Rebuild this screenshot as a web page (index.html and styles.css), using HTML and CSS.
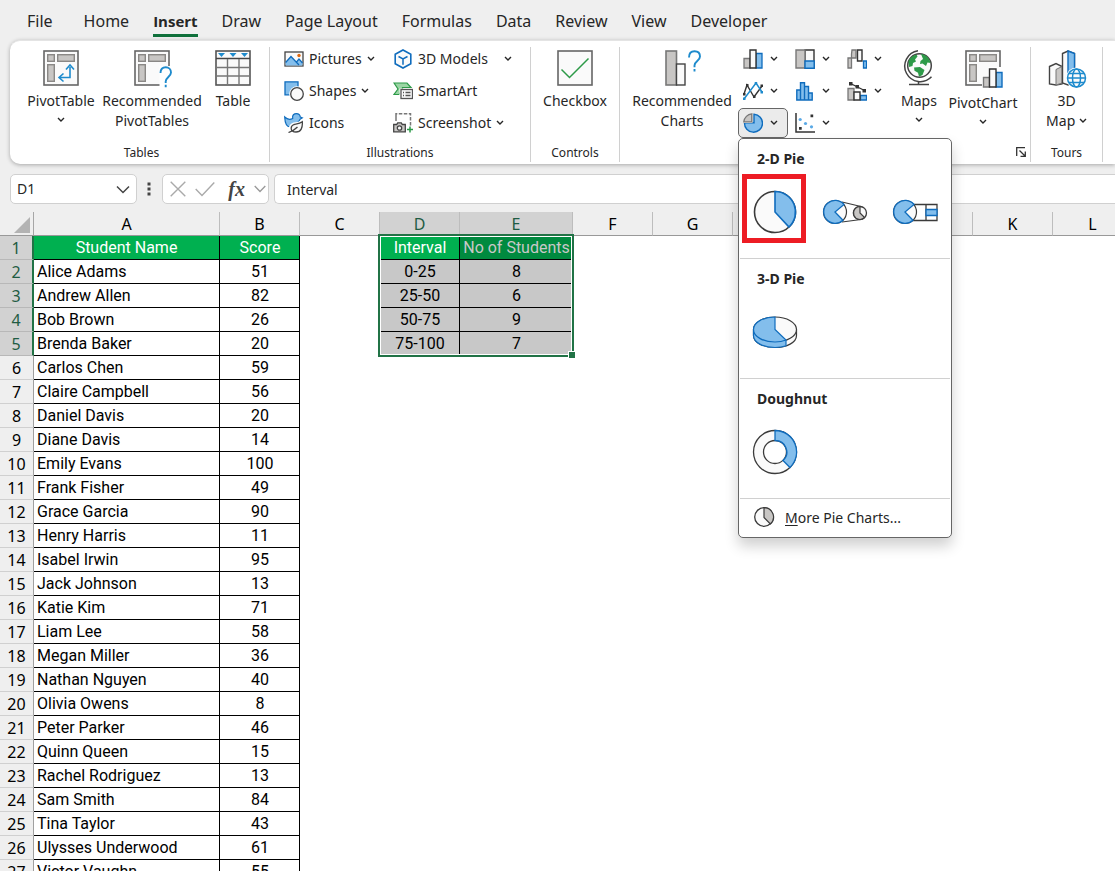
FILE: index.html
```html
<!DOCTYPE html>
<html lang="en">
<head>
<meta charset="utf-8">
<title>Workbook</title>
<link rel="stylesheet" href="styles.css">
</head>
<body>
<svg class="defs" aria-hidden="true">
  <symbol id="chev" viewBox="0 0 8 6"><path d="M1 1l3 3 3-3" fill="none" stroke="#262626" stroke-width="1.4"/></symbol>
  <symbol id="pivot" viewBox="0 0 36 36">
    <rect x="1" y="1" width="34" height="34" fill="#fafafa" stroke="#666" stroke-width="1.6"/>
    <g fill="#c8c6c4" stroke="#8a8886" stroke-width="1.4"><rect x="4.700" y="4.700" width="6.600" height="6.600"/><rect x="14.700" y="4.700" width="16.600" height="6.600"/><rect x="4.700" y="14.700" width="6.600" height="16.600"/></g>
  </symbol>
</svg>

<nav class="tabs">
  <button class="tab tab-file">File</button>
  <button class="tab">Home</button>
  <button class="tab active">Insert</button>
  <button class="tab">Draw</button>
  <button class="tab">Page Layout</button>
  <button class="tab">Formulas</button>
  <button class="tab">Data</button>
  <button class="tab">Review</button>
  <button class="tab">View</button>
  <button class="tab">Developer</button>
</nav>

<div class="ribbon">
  <section class="group g-tables">
    <div class="tools">
      <button class="big w-pt">
        <svg class="ico" viewBox="0 0 36 36"><use href="#pivot"/><path d="M27 17v10.500H17M23 19.500l4-4.500 4 4.500M20.500 23.500l-4.500 4 4.500 4" fill="none" stroke="#1e8bcd" stroke-width="1.600"/></svg>
        <span>PivotTable</span><svg class="chev"><use href="#chev"/></svg>
      </button>
      <button class="big w-rec">
        <svg class="ico wide" viewBox="0 0 40 38"><use href="#pivot" x="2" width="36" height="36"/><path d="M27.500 38V16H40v22z" fill="#fff"/><path d="M28.500 23c0-4 2.500-5.800 5.300-5.800s5.200 2 5.200 5.300c0 4-5.300 5-5.300 9v1.500M33.700 34.800v2.500" fill="none" stroke="#1e8bcd" stroke-width="1.900"/></svg>
        <span>Recommended<br>PivotTables</span>
      </button>
      <button class="big w-tb">
        <svg class="ico" viewBox="0 0 36 36"><rect x="1" y="1" width="34" height="34" fill="#fafafa" stroke="#555" stroke-width="1.600"/><path d="M1 8.500h34" stroke="#444" stroke-width="1.600"/><path d="M1 17.500h34M1 26h34M12.500 9v26M24 9v26" stroke="#777" stroke-width="1.400"/><path d="M3 3h7l-3.500 4zM14.500 3h7L18 7zM26 3h7l-3.500 4z" fill="#1e8bcd"/></svg>
        <span>Table</span>
      </button>
    </div>
    <h2>Tables</h2>
  </section>

  <section class="group g-ill">
    <div class="tools">
      <div class="list">
        <button class="row"><svg class="sm" viewBox="0 0 20 20"><rect x="1" y="3" width="18" height="14" fill="#fafafa" stroke="#444" stroke-width="1.300"/><path d="M1.600 13.500l5.400-6 5.500 6 2.500-3 3.400 3.500v2.400H1.600z" fill="#83beec"/><path d="M1.600 13.500l5.400-6 8 8.500M12.500 13l2.500-3 3.500 4" fill="none" stroke="#0f6cbd" stroke-width="1.300"/><circle cx="15" cy="6.500" r="1.700" fill="#e0690f"/></svg>Pictures<svg class="chev"><use href="#chev"/></svg></button>
        <button class="row"><svg class="sm" viewBox="0 0 20 20"><path d="M1 .800h13v13H1z" fill="#83beec" stroke="#0f6cbd" stroke-width="1.300"/><circle cx="13" cy="13" r="7.800" fill="#fff"/><circle cx="13" cy="13" r="6.300" fill="#fafafa" stroke="#444" stroke-width="1.300"/></svg>Shapes<svg class="chev"><use href="#chev"/></svg></button>
        <button class="row"><svg class="sm" viewBox="0 0 20 20"><path d="M.700 4c2 2 5 3 8 1.500C8 2 10 .700 12.500.700 15 .700 16 2 16.300 4l2 .800-2.300 1.500c-.5 2-2 3-4 4-2 2.500-4 3.500-6 3.500-3 0-5-3-5.300-9.800z" fill="#83beec" stroke="#0f6cbd" stroke-width="1.200"/><path d="M18.500 8.500c.5 6-1 11-6.500 11-7 0-7-6.500-2-8.500 4-.5 6-1 8.500-2.500z" fill="#fafafa" stroke="#fff" stroke-width="3"/><path d="M18.300 8.700c.5 6-1.300 10.300-6.300 10.300-6 0-6-6-2-7.500 3.500-.8 5.800-1 8.300-2.800zM4.500 19.500c3-1 6-2.500 9-5.500" fill="#fafafa" stroke="#444" stroke-width="1.300"/></svg>Icons</button>
      </div>
      <div class="list second">
        <button class="row"><svg class="sm" viewBox="0 0 20 20"><path d="M10 1l7.800 4.300v9.400L10 19l-7.800-4.300V5.300z" fill="#fafafa" stroke="#0f6cbd" stroke-width="1.600"/><path d="M5.500 7.500l4.500 2.300 4.500-2.300M10 9.800v6" fill="none" stroke="#0f6cbd" stroke-width="1.500"/></svg>3D Models<svg class="chev far"><use href="#chev"/></svg></button>
        <button class="row"><svg class="sm" viewBox="0 0 20 20"><path d="M1 2h13l4 4.500H9.500V9L6 13.500H1L5 8z" fill="#9bd5a4" stroke="#2d9a48" stroke-width="1.200"/><rect x="6.500" y="7.500" width="14" height="11" fill="#fff"/><rect x="8" y="8.500" width="11.500" height="9" fill="#fafafa" stroke="#555" stroke-width="1.300"/><path d="M10 11.500h1M12.500 11.500h5M10 14.500h1M12.500 14.500h5" stroke="#555" stroke-width="1.300"/></svg>SmartArt</button>
        <button class="row"><svg class="sm" viewBox="0 0 20 20"><path d="M3 8V.800h14.500V14M3 1v7" fill="none" stroke="#777" stroke-width="1.500" stroke-dasharray="3.500 1.500"/><path d="M.700 11.500h3l1-1.700h3.600l1 1.700h3v7.300H.700z" fill="#c8c6c4" stroke="#444" stroke-width="1.300"/><circle cx="6.500" cy="15" r="2.200" fill="#fafafa" stroke="#444" stroke-width="1.300"/><path d="M17 13.500v6M14 16.500h6" stroke="#2d9a48" stroke-width="1.500"/></svg>Screenshot<svg class="chev"><use href="#chev"/></svg></button>
      </div>
    </div>
    <h2>Illustrations</h2>
  </section>

  <section class="group g-ctl">
    <div class="tools">
      <button class="big">
        <svg class="ico" viewBox="0 0 36 36"><rect x="1" y="1" width="34" height="34" fill="#fafafa" stroke="#666" stroke-width="1.600"/><path d="M4.500 19.500l8 8L31.500 8.500" fill="none" stroke="#2d9a48" stroke-width="1.500"/></svg>
        <span>Checkbox</span>
      </button>
    </div>
    <h2>Controls</h2>
  </section>

  <section class="group g-charts">
    <div class="tools">
      <button class="big w-rch">
        <svg class="ico wide" viewBox="0 0 40 38"><rect x="4" y="1" width="10.500" height="34" fill="#c8c6c4" stroke="#777" stroke-width="1.600"/><rect x="14.500" y="14" width="8.500" height="21" fill="#fafafa" stroke="#444" stroke-width="1.400"/><path d="M27 7.500c0-4.500 2.500-6.300 5.500-6.300S38 3 38 6.500c0 4.500-5.500 4.500-5.500 9v1.700M32.500 19v2.500" fill="none" stroke="#1e8bcd" stroke-width="1.900"/></svg>
        <span>Recommended<br>Charts</span>
      </button>
      <div class="chart-grid">
        <button class="mini" aria-label="Column chart"><svg class="sm" viewBox="0 0 20 20"><path d="M1 9.500h6V19H1z" fill="#c8c6c4" stroke="#777" stroke-width="1.300"/><path d="M13 4.500h6V19h-6z" fill="#83beec" stroke="#0f6cbd" stroke-width="1.300"/><path d="M7 1h6v18H7z" fill="#fafafa" stroke="#333" stroke-width="1.400"/></svg><svg class="chev"><use href="#chev"/></svg></button>
        <button class="mini" aria-label="Hierarchy chart"><svg class="sm" viewBox="0 0 20 20"><path d="M10 1h9v18h-9z" fill="#fafafa" stroke="#333" stroke-width="1.400"/><path d="M1 1h9v18H1z" fill="#c8c6c4" stroke="#777" stroke-width="1.400"/><path d="M10 12h9.200v7.200H10z" fill="#83beec" stroke="#0f6cbd" stroke-width="1.400"/></svg><svg class="chev"><use href="#chev"/></svg></button>
        <button class="mini" aria-label="Waterfall chart"><svg class="sm" viewBox="0 0 20 20"><path d="M1 9h3.500v10H1zM5 1h4v8H4.500V5z" fill="#c8c6c4" stroke="#777" stroke-width="1.300"/><path d="M10.500 1H15v11h-4.500z" fill="#fafafa" stroke="#333" stroke-width="1.400"/><path d="M16.500 12h3v7h-3z" fill="#83beec" stroke="#0f6cbd" stroke-width="1.300"/></svg><svg class="chev"><use href="#chev"/></svg></button>
        <button class="mini" aria-label="Line chart"><svg class="sm" viewBox="0 0 20 20"><path d="M1 13L4 4l7 12 8-11" fill="none" stroke="#333" stroke-width="1.400"/><path d="M1 18L13 2l6 9" fill="none" stroke="#1e8bcd" stroke-width="1.500"/><path d="M3 3h2.500v2.500H3zM0 12h2.500v2.500H0zM10 14.500h2.500V17H10zM17.500 3.500H20V6h-2.500z" fill="#333"/><path d="M0 16.500h2.500V19H0zM11.700 1h2.500v2.500h-2.500zM17.500 10H20v2.500h-2.500z" fill="#1e8bcd"/></svg><svg class="chev"><use href="#chev"/></svg></button>
        <button class="mini" aria-label="Statistic chart"><svg class="sm" viewBox="0 0 20 20"><path d="M1.800 9h3.700v10H1.800zM5.500 1.800h4V19h-4zM9.500 5.500h4V19h-4zM13.500 12h3.700v7h-3.700z" fill="#83beec" stroke="#0f6cbd" stroke-width="1.400"/></svg><svg class="chev"><use href="#chev"/></svg></button>
        <button class="mini" aria-label="Combo chart"><svg class="sm" viewBox="0 0 20 20"><path d="M1 7.500h6V19H1z" fill="#c8c6c4" stroke="#777" stroke-width="1.300"/><path d="M13.500 14.500h6V19h-6z" fill="#83beec" stroke="#0f6cbd" stroke-width="1.300"/><path d="M7 11h6v8H7z" fill="#fafafa" stroke="#333" stroke-width="1.400"/><path d="M3.500 2.500l14 7" stroke="#333" stroke-width="1.300"/><path d="M2 1h3.500v3.500H2zM8.500 4H12v3.500H8.500zM15.500 8H19v3.500h-3.500z" fill="#333"/></svg><svg class="chev"><use href="#chev"/></svg></button>
        <div class="pie-drop">
          <button class="mini open" aria-label="Pie chart" aria-expanded="true"><svg class="sm" viewBox="0 0 20 20"><path d="M11 1.200v8.500H1.500A9 9 0 1 0 11 1.200z" fill="#83beec" stroke="#0f6cbd" stroke-width="1.400"/><path d="M9.500-1v11H-1V-1z" fill="#ebebeb"/><path d="M8.800.800v8H.800A9 9 0 0 1 8.800.800z" fill="#c8c6c4" stroke="#777" stroke-width="1.300"/></svg><svg class="chev"><use href="#chev"/></svg></button>
          <div class="menu">
            <section class="menu-part">
              <h3>2-D Pie</h3>
              <div class="gallery">
                <button class="pick marked" aria-label="Pie"><svg class="art" viewBox="0 0 46 46"><circle cx="23" cy="23" r="20.500" fill="#fafafa" stroke="#3b3b3b" stroke-width="1.600"/><path d="M23 2.500A20.500 20.500 0 0 1 37 38L23 23z" fill="#83beec" stroke="#0f6cbd" stroke-width="1.600"/></svg></button>
                <button class="pick" aria-label="Pie of Pie"><svg class="art" viewBox="0 0 46 46"><path d="M20 13l19 4.500M20 33l19-2.500" stroke="#3b3b3b" stroke-width="1.200"/><circle cx="13" cy="23" r="11.500" fill="#fafafa" stroke="#3b3b3b" stroke-width="1.200"/><path d="M22 15.500A11.500 11.500 0 1 0 21 31.300L13 23z" fill="#83beec" stroke="#0f6cbd" stroke-width="1.300"/><circle cx="38" cy="24" r="6.500" fill="#fafafa" stroke="#3b3b3b" stroke-width="1.300"/><path d="M38 17.500a6.500 6.500 0 1 0 4.600 11L38 24z" fill="#c8c6c4" stroke="#3b3b3b" stroke-width="1.200"/></svg></button>
                <button class="pick" aria-label="Bar of Pie"><svg class="art" viewBox="0 0 46 46"><path d="M20 15.500h25v16H20M34 15.500v16" fill="none" stroke="#3b3b3b" stroke-width="1.300"/><circle cx="13" cy="23" r="11.500" fill="#fafafa" stroke="#3b3b3b" stroke-width="1.200"/><path d="M22 15.500A11.500 11.500 0 1 0 21 31.300L13 23z" fill="#83beec" stroke="#0f6cbd" stroke-width="1.300"/><path d="M34 20.500h11v6H34z" fill="#83beec" stroke="#0f6cbd" stroke-width="1.300"/></svg></button>
              </div>
            </section>
            <section class="menu-part">
              <h3>3-D Pie</h3>
              <div class="gallery">
                <button class="pick" aria-label="3-D Pie"><svg class="art" viewBox="0 0 46 46"><path d="M1.500 20.500v6c0 7 9.700 12 21.500 12s21.500-5 21.500-12v-6" fill="#fafafa" stroke="#3b3b3b" stroke-width="1.200"/><ellipse cx="23" cy="20.500" rx="21.500" ry="12.500" fill="#fafafa" stroke="#3b3b3b" stroke-width="1.200"/><path d="M23 8C11 8 1.500 13.500 1.500 20.500v6c0 7 9.700 12 21.500 12 4 0 8-.600 11-1.700V31L23 20.500z" fill="#83beec"/><path d="M23 8C11 8 1.500 13.500 1.500 20.500v6c0 7 9.700 12 21.500 12 4 0 8-.600 11-1.700V31L23 20.500zM1.500 20.500c0 7 9.500 12.500 21.500 12.500 4 0 8-.700 11-2" fill="none" stroke="#0f6cbd" stroke-width="1.200"/></svg></button>
              </div>
            </section>
            <section class="menu-part">
              <h3>Doughnut</h3>
              <div class="gallery">
                <button class="pick" aria-label="Doughnut"><svg class="art" viewBox="0 0 46 46"><circle cx="23" cy="23" r="21.500" fill="#fafafa" stroke="#3b3b3b" stroke-width="1.300"/><circle cx="23" cy="23" r="11.500" fill="#fff" stroke="#3b3b3b" stroke-width="1.300"/><path d="M23 1.500A21.500 21.500 0 0 1 38 38.500L31 31.500A11.500 11.500 0 0 0 23 11.500z" fill="#83beec" stroke="#0f6cbd" stroke-width="1.300"/></svg></button>
              </div>
            </section>
            <button class="more"><svg class="more-ico" viewBox="0 0 22 22"><circle cx="11" cy="11" r="9.300" fill="#fafafa" stroke="#3b3b3b" stroke-width="1.300"/><path d="M11 1.700A9.300 9.300 0 0 1 17.300 18L11 11.500z" fill="#c8c6c4" stroke="#3b3b3b" stroke-width="1.200"/></svg><span><u>M</u>ore Pie Charts...</span></button>
          </div>
        </div>
        <button class="mini" aria-label="Scatter chart"><svg class="sm" viewBox="0 0 20 20"><path d="M1 0v19h19" fill="none" stroke="#333" stroke-width="1.500"/><path d="M15.500 1.500h2.700v2.700h-2.700zM4 14h2.700v2.700H4z" fill="#333"/><circle cx="5.200" cy="6.500" r="1.600" fill="#5aa9e6"/><circle cx="10.500" cy="10.500" r="1.600" fill="#5aa9e6"/><circle cx="16.500" cy="13.800" r="1.600" fill="#5aa9e6"/></svg><svg class="chev"><use href="#chev"/></svg></button>
      </div>
      <button class="big w-maps">
        <svg class="ico" viewBox="0 0 36 36"><circle cx="18.500" cy="15.500" r="11.800" fill="#fafafa" stroke="#444" stroke-width="1.500"/><path d="M7.500 11c2-4 5-6 8-6.500l1 2-2.500 3 1 2-3 1.500-.500 3-3.500 1zM20 4c5 .500 8.500 4 9.500 9l-3-.500-1.500 3.500-3.500-2.500-2.500.500.500-3 2.500-2zM13 17.500l6-.500 4.500 3-2 5-3.500 1.800-1-4-3.500-2z" fill="#2d9a48"/><path d="M17 .800a15.500 15.500 0 1 0 13.500 26M17.500 31v3M8 34.500h20" fill="none" stroke="#444" stroke-width="1.500"/></svg>
        <span>Maps</span><svg class="chev"><use href="#chev"/></svg>
      </button>
      <button class="big w-pc">
        <svg class="ico wide" viewBox="0 0 40 38"><use href="#pivot" x="2" width="36" height="36"/><path d="M19 38V26h6v-9h15v21z" fill="#fff"/><path d="M20.500 27.500h6V37h-6z" fill="#c8c6c4" stroke="#777" stroke-width="1.400"/><path d="M33 22.500h6V37h-6z" fill="#83beec" stroke="#0f6cbd" stroke-width="1.400"/><path d="M26.500 19H33v18h-6.500z" fill="#fafafa" stroke="#333" stroke-width="1.400"/></svg>
        <span>PivotChart</span><svg class="chev"><use href="#chev"/></svg>
      </button>
    </div>
    <button class="launcher" aria-label="Chart options"><svg viewBox="0 0 10 10"><path d="M.700 9V.700H9M3.500 3.500L9 9M9.300 4.500v4.800H4.500" fill="none" stroke="#333" stroke-width="1.300"/></svg></button>
  </section>

  <section class="group g-tours">
    <div class="tools">
      <button class="big">
        <svg class="ico wide" viewBox="0 0 40 38"><path d="M2.500 16.500l6.500-3 6 3V34l-6 1-6.500-1z" fill="#fafafa" stroke="#444" stroke-width="1.400"/><path d="M9 19.500l6-3V33l-6 2z" fill="#c8c6c4" stroke="#777"/><path d="M15.500 3.500L21 1l6.500 2.500V32L21 35l-5.500-2z" fill="#fafafa" stroke="#444" stroke-width="1.400"/><path d="M21 1l6.500 2.500V30H21z" fill="#83beec" stroke="#0f6cbd" stroke-width="1.400"/><circle cx="29.500" cy="28" r="10.500" fill="#fff"/><g fill="none" stroke="#1e8bcd" stroke-width="1.500"><circle cx="29.500" cy="28" r="9" fill="#fafafa"/><ellipse cx="29.500" cy="28" rx="4" ry="9"/><path d="M20.500 28h18M22 23.500h15M22 32.500h15"/></g></svg>
        <span>3D<br>Map <svg class="chev"><use href="#chev"/></svg></span>
      </button>
    </div>
    <h2>Tours</h2>
  </section>
</div>

<div class="formula-row">
  <div class="name-box">
    <input class="name-input" aria-label="Name box" value="D1">
    <button class="plain" aria-label="Show names"><svg class="wide-chev" viewBox="0 0 14 9"><path d="M1 1.500l6 6 6-6" fill="none" stroke="#444" stroke-width="1.500"/></svg></button>
  </div>
  <svg class="dots" viewBox="0 0 4 14"><path d="M.500.500h3v3h-3zM.500 5.500h3v3h-3zM.500 10.500h3v3h-3z" fill="#444"/></svg>
  <div class="fx-box">
    <button class="plain" aria-label="Cancel"><svg class="fx-x" viewBox="0 0 16 16"><path d="M.700.700l14.600 14.600M15.300.700L.700 15.300" stroke="#aaa" stroke-width="1.400"/></svg></button>
    <button class="plain" aria-label="Enter"><svg class="fx-tick" viewBox="0 0 20 16"><path d="M.700 8l6.300 6.500L19.300 1.500" fill="none" stroke="#aaa" stroke-width="1.400"/></svg></button>
    <button class="plain fx" aria-label="Insert function">fx</button>
    <button class="plain" aria-label="More"><svg class="fx-chev" viewBox="0 0 12 8"><path d="M.700 1l5.300 5.500L11.300 1" fill="none" stroke="#999" stroke-width="1.300"/></svg></button>
  </div>
  <input class="formula" aria-label="Formula bar" value="Interval">
</div>

<main class="sheet">
<table>
<colgroup><col class="c-row"><col class="c-a"><col class="c"><col class="c"><col class="c"><col class="c-e"><col class="c"><col class="c"><col class="c"><col class="c"><col class="c"><col class="c"><col class="c"></colgroup>
<thead><tr><th class="corner"><svg viewBox="0 0 16 16"><path d="M16 0v16H0z" fill="#b3b3b3"/></svg></th><th>A</th><th>B</th><th>C</th><th class="on">D</th><th class="on">E</th><th>F</th><th>G</th><th>H</th><th>I</th><th>J</th><th>K</th><th>L</th></tr></thead>
<tbody>
<tr><th class="on">1</th><td class="name head">Student Name</td><td class="num head">Score</td><td></td><td class="num head anchor">Interval<div class="selection"></div></td><td class="num head dim">No of Students</td></tr>
<tr><th class="on">2</th><td class="name">Alice Adams</td><td class="num">51</td><td></td><td class="num sel">0-25</td><td class="num sel">8</td></tr>
<tr><th class="on">3</th><td class="name">Andrew Allen</td><td class="num">82</td><td></td><td class="num sel">25-50</td><td class="num sel">6</td></tr>
<tr><th class="on">4</th><td class="name">Bob Brown</td><td class="num">26</td><td></td><td class="num sel">50-75</td><td class="num sel">9</td></tr>
<tr><th class="on">5</th><td class="name">Brenda Baker</td><td class="num">20</td><td></td><td class="num sel">75-100</td><td class="num sel">7</td></tr>
<tr><th>6</th><td class="name">Carlos Chen</td><td class="num">59</td></tr>
<tr><th>7</th><td class="name">Claire Campbell</td><td class="num">56</td></tr>
<tr><th>8</th><td class="name">Daniel Davis</td><td class="num">20</td></tr>
<tr><th>9</th><td class="name">Diane Davis</td><td class="num">14</td></tr>
<tr><th>10</th><td class="name">Emily Evans</td><td class="num">100</td></tr>
<tr><th>11</th><td class="name">Frank Fisher</td><td class="num">49</td></tr>
<tr><th>12</th><td class="name">Grace Garcia</td><td class="num">90</td></tr>
<tr><th>13</th><td class="name">Henry Harris</td><td class="num">11</td></tr>
<tr><th>14</th><td class="name">Isabel Irwin</td><td class="num">95</td></tr>
<tr><th>15</th><td class="name">Jack Johnson</td><td class="num">13</td></tr>
<tr><th>16</th><td class="name">Katie Kim</td><td class="num">71</td></tr>
<tr><th>17</th><td class="name">Liam Lee</td><td class="num">58</td></tr>
<tr><th>18</th><td class="name">Megan Miller</td><td class="num">36</td></tr>
<tr><th>19</th><td class="name">Nathan Nguyen</td><td class="num">40</td></tr>
<tr><th>20</th><td class="name">Olivia Owens</td><td class="num">8</td></tr>
<tr><th>21</th><td class="name">Peter Parker</td><td class="num">46</td></tr>
<tr><th>22</th><td class="name">Quinn Queen</td><td class="num">15</td></tr>
<tr><th>23</th><td class="name">Rachel Rodriguez</td><td class="num">13</td></tr>
<tr><th>24</th><td class="name">Sam Smith</td><td class="num">84</td></tr>
<tr><th>25</th><td class="name">Tina Taylor</td><td class="num">43</td></tr>
<tr><th>26</th><td class="name">Ulysses Underwood</td><td class="num">61</td></tr>
<tr><th>27</th><td class="name">Victor Vaughn</td><td class="num">55</td></tr>
</tbody>
</table>
</main>
</body>
</html>
```
FILE: styles.css
```css
* { box-sizing: border-box; }
body {
  margin: 0;
  height: 100vh;
  overflow: hidden;
  display: flex;
  flex-direction: column;
  background: #efefef;
  color: #262626;
  font: 14px/20px "Noto Sans", "Open Sans", sans-serif;
}
button, input { font: inherit; color: inherit; margin: 0; padding: 0; border: 0; background: none; }
h2, h3 { margin: 0; }
svg { display: block; flex: none; }
.defs { position: absolute; width: 0; height: 0; }

.tabs { flex: none; display: flex; gap: 24px; height: 40px; padding: 6px 27px 0; font-size: 16px; }
.tab { height: 31px; padding-top: 2px; border-bottom: 3px solid transparent; white-space: nowrap; }
.tab-file { margin-right: 7px; }
.tab.active { font-family: "Open Sans", "Noto Sans", sans-serif; font-size: 15px; font-weight: 700; border-bottom-color: #0f703b; }

.ribbon {
  flex: none;
  display: flex;
  height: 124px;
  margin-left: 10px;
  padding: 6px 0 2px;
  background: #fff;
  border-top: 1px solid #e4e4e4;
  border-radius: 10px 0 0 10px;
  box-shadow: 0 1px 4px #0000004d;
}
.group { flex: none; display: flex; flex-direction: column; border-right: 1px solid #d0d0d0; }
.group h2 { text-align: center; font-size: 12px; font-weight: 400; line-height: 18px; margin-top: auto; }
.g-tables h2 { padding-left: 4px; }
.tools { display: flex; justify-content: center; }
.g-tables { width: 260px; }
.g-ill { width: 261px; }
.g-ctl { width: 89px; }
.g-charts { width: 411px; }
.g-tours { width: 72px; }
.g-tables .tools { justify-content: flex-start; padding-left: 12px; }
.g-charts .tools, .g-ill .tools { justify-content: flex-start; }

.big { display: flex; flex-direction: column; align-items: center; padding-top: 3px; }
.big > span { margin-top: 5px; white-space: nowrap; }
.big > .chev { margin-top: 6px; }
.big span .chev { display: inline-block; vertical-align: 2px; }
.ico { width: 36px; height: 36px; }
.ico.wide { width: 40px; height: 38px; margin-bottom: -2px; }
.chev { width: 8px; height: 6px; }
.w-pt { width: 78px; }
.w-rec { width: 104px; }
.w-tb { width: 58px; }
.w-rch { width: 106px; margin-left: 9px; }
.w-maps { width: 50px; }
.w-pc { width: 78px; }
.w-pc > span { margin-top: 7px; }

.list { display: flex; flex-direction: column; padding-left: 14px; }
.list.second { padding-left: 0; }
.row { display: flex; align-items: center; height: 32px; width: 109px; gap: 5px; white-space: nowrap; margin-top: -4px; margin-bottom: 4px; }
.row .chev.far { margin-left: 11px; }
.sm { width: 20px; height: 20px; }

.chart-grid { display: grid; grid-template-columns: repeat(3, 52px); grid-auto-rows: 32px; margin: -4px 0 0 3px; }
.mini { display: flex; align-items: center; gap: 7px; width: 50px; height: 30px; margin-top: 1px; padding-left: 5px; }
.mini.open { padding-left: 4px; background: #ebebeb; border: 1px solid #666; border-radius: 5px; }
.launcher { align-self: flex-end; margin: auto 4px 5px 0; width: 10px; height: 10px; }

.pie-drop { position: relative; }
.menu {
  position: absolute;
  z-index: 10;
  top: 31px;
  left: 0;
  width: 214px;
  background: #fff;
  border: 1px solid #666;
  border-radius: 5px;
  box-shadow: 0 8px 14px #00000030;
}
.menu-part { height: 120px; margin: 0 1px; padding: 10px 2px 0; border-bottom: 1px solid #d0d0d0; }
.menu-part h3 { padding-left: 15px; font-size: 14px; font-weight: 700; line-height: 20px; }
.gallery { display: flex; gap: 6px; margin-top: 5px; }
.pick { display: flex; align-items: center; justify-content: center; width: 64px; height: 69px; padding: 7px 0 0 2px; border: 5px solid transparent; }
.pick.marked { border-color: #ed1c24; }
.art { width: 46px; height: 46px; }
.more { display: flex; align-items: center; gap: 10px; width: 100%; height: 38px; padding-left: 14px; }
.more-ico { width: 22px; height: 22px; margin-bottom: 2px; }
.more u { text-underline-offset: 2px; }

.formula-row { flex: none; display: flex; align-items: center; height: 48px; padding: 2px 0 0 10px; }
.name-box, .fx-box, .formula { height: 30px; background: #fff; border: 1px solid #d0d0d0; border-radius: 5px; }
.name-box { display: flex; align-items: center; width: 127px; padding: 0 6px; }
.name-input { flex: 1; min-width: 0; }
.wide-chev { width: 14px; height: 9px; }
.dots { width: 4px; height: 14px; margin: 0 11px 0 10px; }
.fx-box { display: flex; align-items: center; justify-content: space-between; width: 107px; padding: 0 2px 0 7px; }
.fx-x { width: 16px; height: 16px; }
.fx-tick { width: 20px; height: 16px; }
.fx-chev { width: 12px; height: 8px; }
.fx { padding-left: 4px; font: italic bold 20px/24px "Liberation Serif", serif; color: #444; }
.formula { flex: 1; min-width: 0; margin-left: 5px; padding-left: 12px; border-right: 0; border-radius: 5px 0 0 5px; }

.sheet { flex: 1; min-height: 0; overflow: hidden; background: #fff; font-size: 16px; color: #000; }
table { table-layout: fixed; width: 1133px; border-collapse: separate; border-spacing: 0; }
.c-row { width: 34px; }
.c-a { width: 186px; }
.c { width: 80px; }
.c-e { width: 113px; }
th, td { height: 24px; padding: 0; line-height: 22px; white-space: nowrap; overflow: hidden; }
th { font-weight: 400; background: #efefef; }
thead th { border-right: 1px solid #bdbdbd; border-bottom: 1px solid #999; }
th.on { background: #d2d2d2; color: #1f5c43; }
thead th.on { border-bottom-color: #217346; }
thead .corner { border-right-color: #a6a6a6; }
.corner svg { width: 16px; height: 16px; margin: 3px 0 0 14px; }
tbody th { border-right: 1px solid #a0a0a0; border-bottom: 1px solid #d0d0d0; }
tbody th.on { border-right: 2px solid #217346; border-bottom-color: #b8b8b8; }
td { padding-top: 1px; font-family: Roboto, "Noto Sans", sans-serif; }
.name, .num { border-right: 1px solid #000; border-bottom: 1px solid #000; }
.name { padding-left: 3px; }
.num { padding-left: 1px; }
.num, .name.head { text-align: center; }
.name.head { padding-left: 0; }
.head { background: #00b050; color: #fff; }
.head.dim { background: #008a3f; color: #c8c8c8; }
.sel { background: #c8c8c8; }
.anchor { position: relative; overflow: visible; }
thead th { position: relative; }
.selection { position: absolute; z-index: 2; top: -2px; left: -2px; width: 196px; height: 123px; border: 2px solid #217346; box-shadow: inset 0 0 0 1px #fff; }
.selection::after { content: ""; position: absolute; right: -3px; bottom: -3px; width: 6px; height: 6px; background: #217346; border: 1px solid #fff; border-right: 0; border-bottom: 0; }
```
